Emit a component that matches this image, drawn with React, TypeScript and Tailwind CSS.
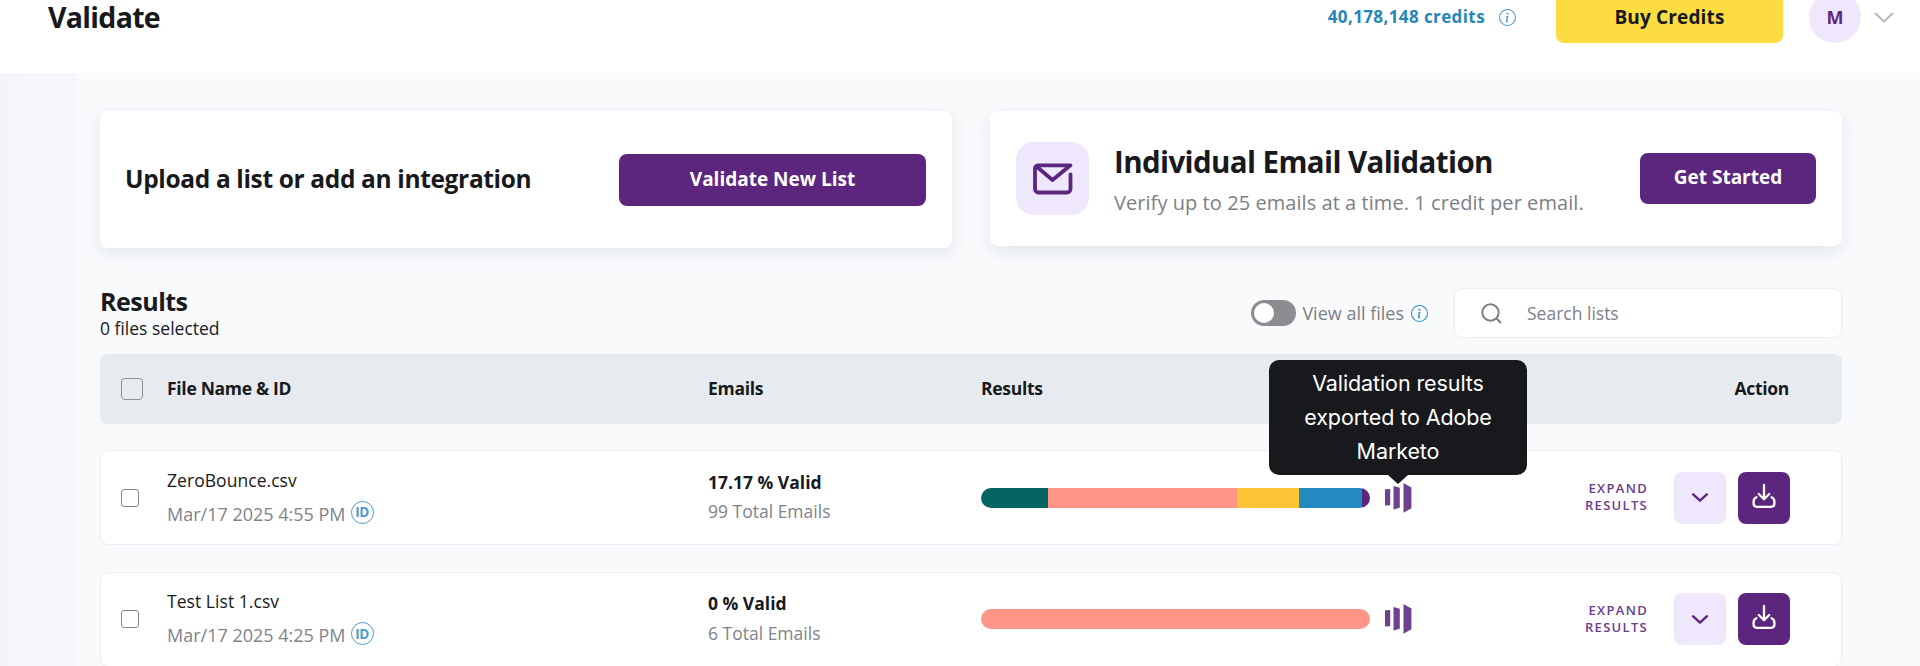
import { useState } from "react";
import { BsInfoCircle } from "react-icons/bs";

type ResultRow = {
  name: string;
  date: string;
  valid: string;
  total: string;
  segments: { color: string; width: number }[];
  tooltip?: string;
};

const rows: ResultRow[] = [
  {
    name: "ZeroBounce.csv",
    date: "Mar/17 2025 4:55 PM",
    valid: "17.17 % Valid",
    total: "99 Total Emails",
    segments: [
      { color: "bg-[#046562]", width: 67 },
      { color: "bg-[#ff9586]", width: 188.5 },
      { color: "bg-[#fbc535]", width: 62.5 },
      { color: "bg-[#238ac1]", width: 63 },
      { color: "bg-[#5c267f]", width: 7.5 },
    ],
    tooltip: "Validation results exported to Adobe Marketo",
  },
  {
    name: "Test List 1.csv",
    date: "Mar/17 2025 4:25 PM",
    valid: "0 % Valid",
    total: "6 Total Emails",
    segments: [{ color: "bg-[#ff9586]", width: 388.5 }],
  },
];

function Chevron({ className }: { className: string }) {
  return (
    <svg viewBox="0 0 20 11" fill="none" stroke="currentColor" strokeLinecap="round" strokeLinejoin="round" className={className}>
      <path d="M1.5 1.5 10 9.5l8.5-8" />
    </svg>
  );
}

function MailIcon() {
  return (
    <svg width="40" height="32" viewBox="0 0 40 32" fill="none" stroke="#5c267f" strokeWidth="3.8" strokeLinecap="round" strokeLinejoin="round">
      <path d="M37.5 11.5V26a3.5 3.5 0 0 1-3.5 3.5H5.5A3.5 3.5 0 0 1 2 26V5.5A3.2 3.2 0 0 1 5 2.3h32.5L19.5 17 3.5 3.5" />
    </svg>
  );
}

function DownloadIcon() {
  return (
    <svg width="24" height="26" viewBox="0 0 24 26" fill="none" stroke="#fff" strokeWidth="2.3" strokeLinecap="round" strokeLinejoin="round">
      <path d="M12 2v14M6.8 11l5.2 5.2 5.2-5.2" />
      <path d="M4.4 14.2Q1.6 15.4 1.6 18.4v2.2q0 3.2 3.2 3.2h14.4q3.2 0 3.2-3.2v-2.2q0-3-2.8-4.2" />
    </svg>
  );
}

function MarketoIcon() {
  return (
    <svg width="27" height="30" viewBox="0 0 27 30" fill="#6c428f">
      <path d="M0 6.2 5.2 6v16.2l-5.2.4zM8.5 3l6.3 1.8v20L8.5 26.6zM18.5 0l7.9 4.4v20.8L18.5 29.8z" />
    </svg>
  );
}

export default function App() {
  const [viewAll, setViewAll] = useState(false);
  const [query, setQuery] = useState("");

  return (
    <div className="h-[666px] overflow-hidden bg-white font-['Open_Sans','Noto_Sans',sans-serif] text-[#17191c]">
      <header className="flex h-[73px] items-start pr-[26px] pl-[48px]">
        <div className="flex h-[33px] flex-1 items-center">
          <h1 className="text-[28.5px] leading-[32px] font-bold tracking-[-0.7px]">Validate</h1>
        </div>
        <div className="-mt-[9px] flex h-[52px] items-center">
          <span className="text-[17px] font-bold tracking-[0.4px] text-[#2587b8]">40,178,148 credits</span>
          <BsInfoCircle className="ml-[14px] size-[17px] text-[#4d9cc5]" />
          <button className="ml-[40px] h-[52px] w-[227px] rounded-lg bg-[#fddc42] text-[19px] font-bold tracking-[0.15px]">Buy Credits</button>
          <span className="ml-[26px] flex size-[52px] items-center justify-center rounded-full bg-[#efe7fb] text-[18px] font-bold text-[#5c267f]">
            M
          </span>
          <Chevron className="ml-[13px] h-[11px] w-[20px] stroke-2 text-[#b4b8bf]" />
        </div>
      </header>

      <main className="h-[593px] bg-[linear-gradient(to_right,#f3f5fb_0,#f6f7fb_30px,#f5f7fc_76px,#f9fafc_77px)] pt-[38px] pr-[78px] pl-[100px]">
        <div className="flex items-start gap-[38px]">
          <section className="flex h-[137px] w-[852px] items-center justify-between rounded-lg bg-white pr-[26px] pl-[25px] shadow-[0_5px_16px_rgba(60,80,120,0.12)]">
            <h2 className="text-[24.5px] font-bold tracking-[-0.35px]">Upload a list or add an integration</h2>
            <button className="h-[52px] w-[307px] rounded-lg bg-[#5c267f] text-[19px] font-bold text-white">Validate New List</button>
          </section>
          <section className="flex h-[135px] w-[852px] items-center rounded-lg bg-white pr-[26px] pl-[26px] shadow-[0_5px_16px_rgba(60,80,120,0.12)]">
            <div className="flex size-[73px] items-center justify-center rounded-[18px] bg-[#efe7fb]">
              <MailIcon />
            </div>
            <div className="ml-[25px] flex-1 pt-[3px]">
              <h2 className="text-[29.5px] leading-[44px] font-bold tracking-[-0.6px]">Individual Email Validation</h2>
              <p className="pt-[2px] text-[20px] leading-[34px] tracking-[0.06px] text-[#7c8087]">
                Verify up to 25 emails at a time. 1 credit per email.
              </p>
            </div>
            <button className="h-[51px] w-[176px] rounded-lg bg-[#5c267f] pb-[2px] text-[19px] font-bold text-white">Get Started</button>
          </section>
        </div>

        <div className="mt-[40px] mb-[16px] flex h-[50px] items-start">
          <div className="flex-1">
            <h2 className="text-[25px] leading-[26px] font-bold tracking-[-0.5px]">Results</h2>
            <p className="text-[17.5px] leading-[28px]">0 files selected</p>
          </div>
          <div className="flex h-[50px] items-center">
            <button
              role="switch"
              aria-checked={viewAll}
              aria-label="View all files"
              onClick={() => setViewAll(!viewAll)}
              className="flex h-[26px] w-[45px] items-center rounded-full bg-[#8c8d90] px-[3px]"
            >
              <span className={viewAll ? "ml-auto size-5 rounded-full bg-white" : "size-5 rounded-full bg-white"} />
            </button>
            <span className="ml-[6px] text-[18px] text-[#7c8087]">View all files</span>
            <BsInfoCircle className="ml-[7px] size-[17px] text-[#2e90c5]" />
            <label className="ml-[26px] flex h-[50px] w-[388px] items-center rounded-lg border border-[#eceef3] bg-white pl-[26px]">
              <svg width="21" height="21" viewBox="0 0 21 21" fill="none" stroke="#7c8087" strokeWidth="2" strokeLinecap="round">
                <circle cx="9.5" cy="9.5" r="8.2" />
                <path d="m15.5 15.5 4 4" />
              </svg>
              <input
                value={query}
                onChange={(e) => setQuery(e.target.value)}
                placeholder="Search lists"
                className="ml-[25px] w-[280px] text-[17.5px] outline-none placeholder:text-[#7c8087]"
              />
            </label>
          </div>
        </div>

        <div className="grid h-[70px] grid-cols-[67px_541px_273px_1fr] items-center rounded-lg bg-[#e7ebf0] text-[17.5px] font-bold tracking-[-0.3px]">
          <span className="ml-[21px] size-[22px] rounded-[4px] border-[1.5px] border-[#8b9096]" />
          <span className="pb-[2px]">File Name &amp; ID</span>
          <span className="pb-[2px]">Emails</span>
          <div className="flex justify-between pr-[53px] pb-[2px]">
            <span>Results</span>
            <span>Action</span>
          </div>
        </div>

        <div className="mt-[26px] flex flex-col gap-[26.5px]">
          {rows.map((row) => (
            <div key={row.name} className="grid h-[95px] grid-cols-[66px_541px_273px_1fr] items-center rounded-lg border border-[#eceef3] bg-white">
              <span className="ml-[20px] size-[18px] rounded-[3px] border-[1.5px] border-[#83888e]" />
              <div className="-mt-[2px] leading-[34px]">
                <div className="text-[17.5px] tracking-[0.05px]">{row.name}</div>
                <div className="flex items-center gap-[5px] text-[18px] text-[#80838b]">
                  {row.date}
                  <span className="-mt-[3px] flex size-[23px] items-center justify-center rounded-full border-[1.5px] border-[#4c9bc9] text-[13.5px] font-bold tracking-[-0.5px] text-[#4c9bc9]">
                    ID
                  </span>
                </div>
              </div>
              <div className="-mt-px leading-[29.5px]">
                <div className="text-[17.5px] font-bold">{row.valid}</div>
                <div className="text-[17.5px] text-[#80838b]">{row.total}</div>
              </div>
              <div className="flex items-center pr-[51px]">
                <div className="flex h-[20px] w-[388.5px] overflow-hidden rounded-full">
                  {row.segments.map((s) => (
                    <div key={s.color} className={s.color} style={{ width: s.width }} />
                  ))}
                </div>
                <div className="relative ml-[15px]">
                  <MarketoIcon />
                  {row.tooltip ? (
                    <div
                      role="tooltip"
                      className="absolute bottom-[38px] left-1/2 w-[258px] -translate-x-1/2 rounded-[10px] bg-[#17191c] px-5 pt-[6px] pb-[7px] text-center font-['Inter',sans-serif] text-[21.5px] leading-[34px] tracking-[-0.1px] text-white"
                    >
                      {row.tooltip}
                      <span className="absolute top-full left-1/2 -translate-x-1/2 border-x-[10px] border-t-[9px] border-x-transparent border-t-[#17191c]" />
                    </div>
                  ) : null}
                </div>
                <span className="ml-auto w-[72px] pb-px text-right text-[13px] leading-[17px] font-semibold tracking-[1.3px] text-[#6a3c8c]">
                  EXPAND RESULTS
                </span>
                <button aria-label="Expand results" className="ml-[26px] flex size-[52px] items-center justify-center rounded-lg bg-[#efe7fb] text-[#5c267f]">
                  <Chevron className="h-[9px] w-[16px] stroke-3" />
                </button>
                <button aria-label="Download" className="ml-[12px] flex size-[52px] items-center justify-center rounded-lg bg-[#5c267f] pb-1">
                  <DownloadIcon />
                </button>
              </div>
            </div>
          ))}
        </div>
      </main>
    </div>
  );
}
